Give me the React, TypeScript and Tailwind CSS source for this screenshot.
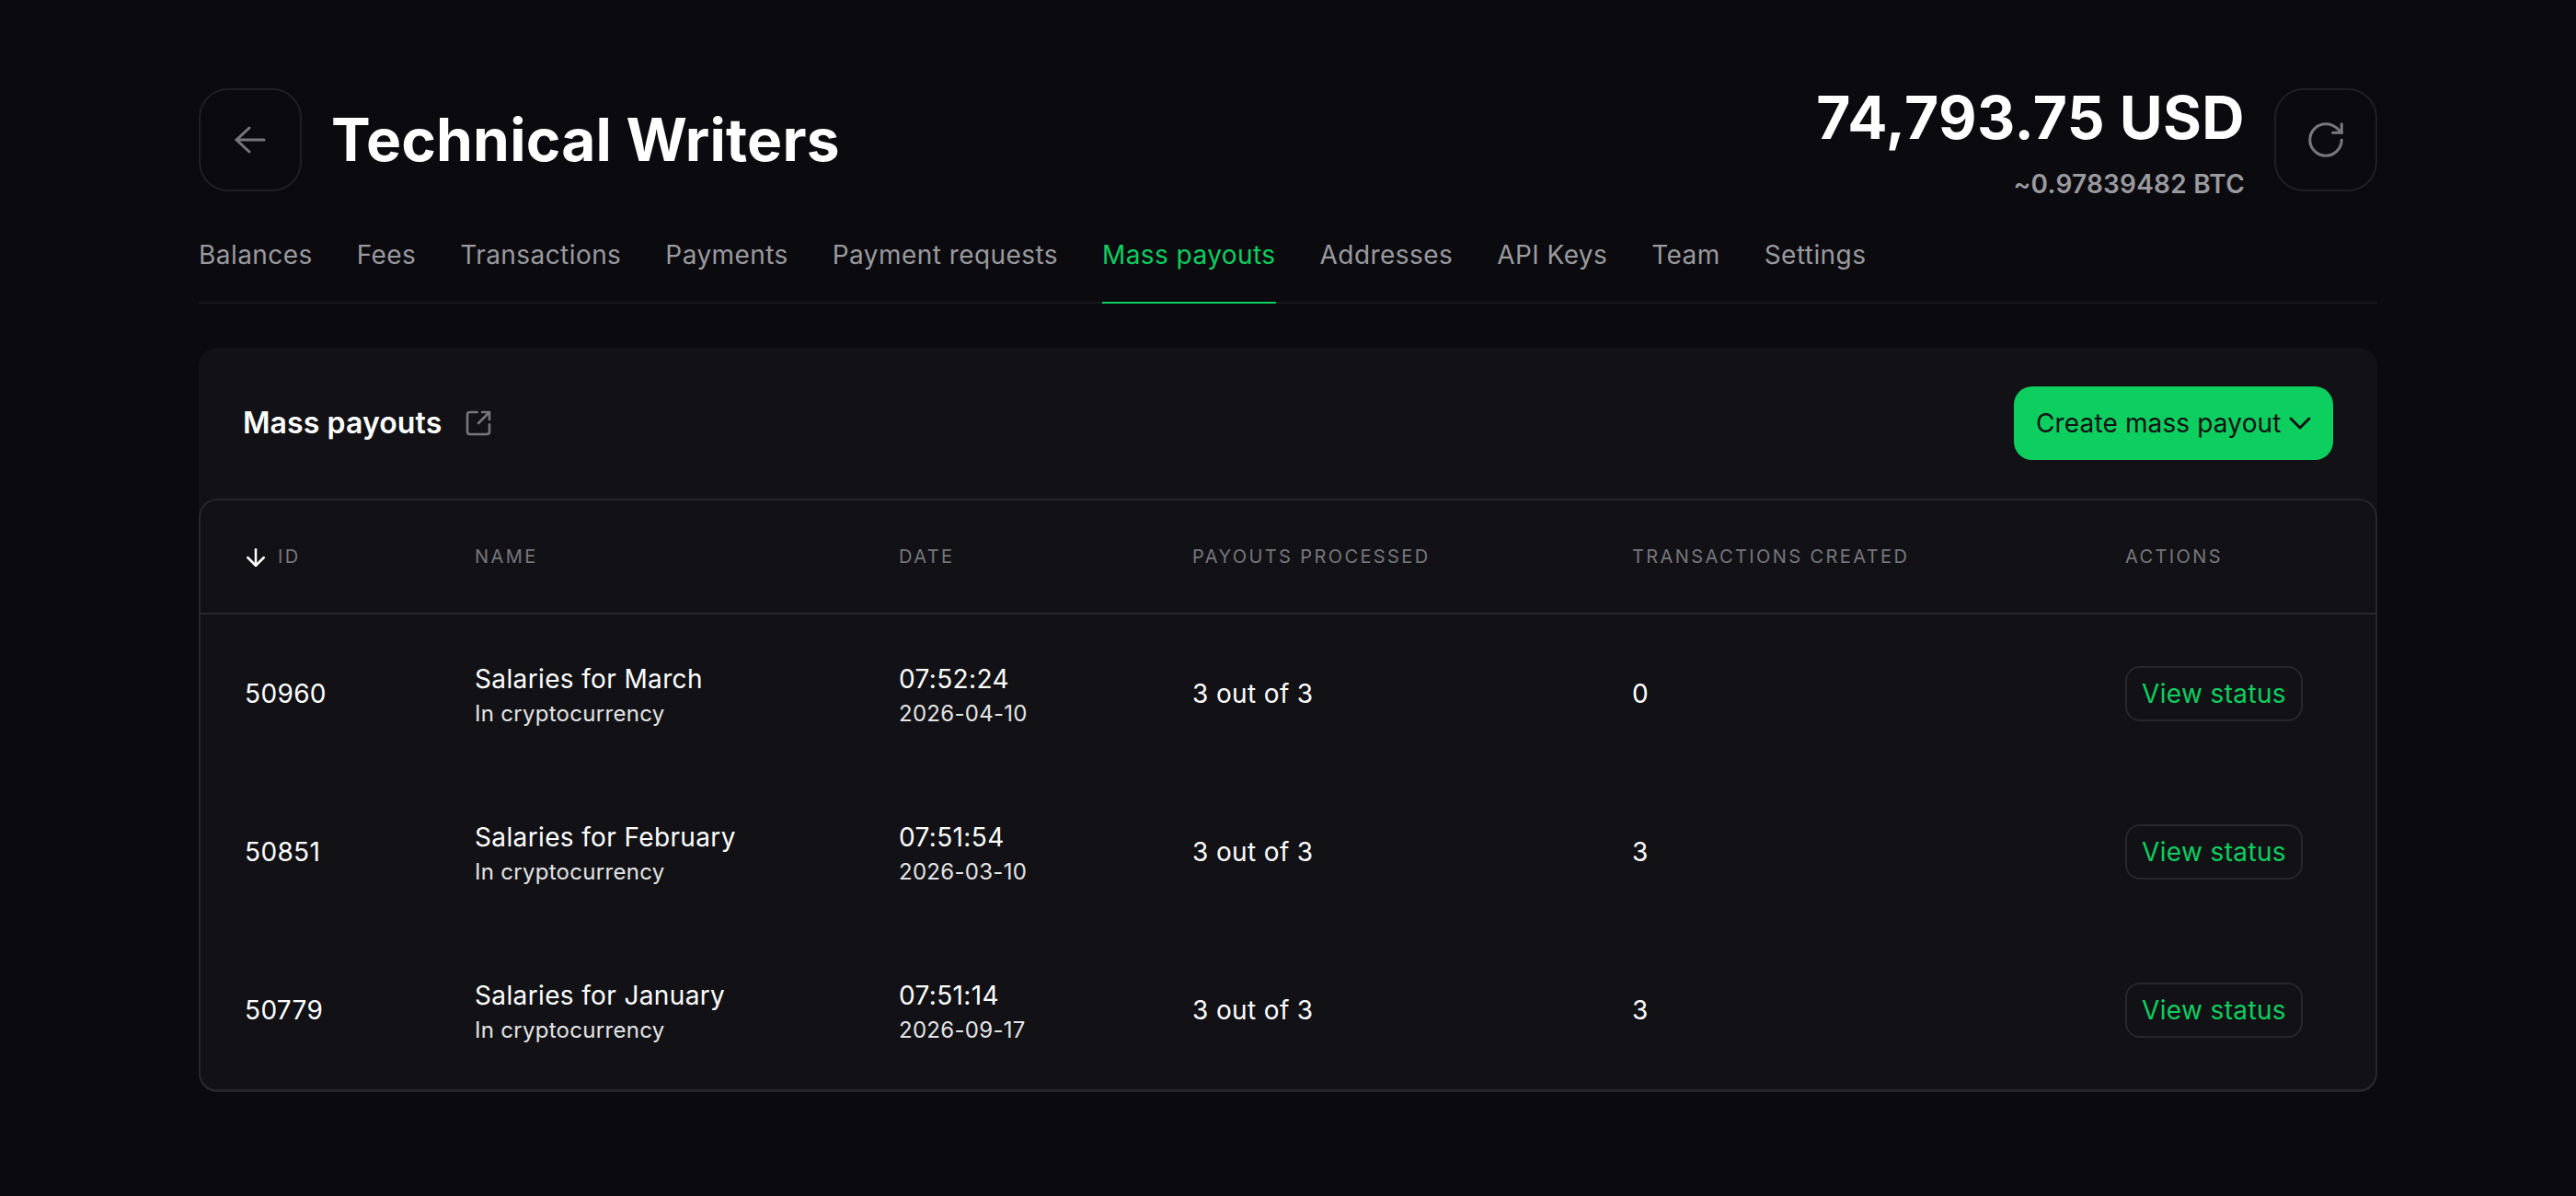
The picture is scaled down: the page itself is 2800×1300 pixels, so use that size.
import { ArrowDown, ChevronDown, RotateCw, SquareArrowOutUpRight } from "lucide-react";

const tabs = [
  "Balances",
  "Fees",
  "Transactions",
  "Payments",
  "Payment requests",
  "Mass payouts",
  "Addresses",
  "API Keys",
  "Team",
  "Settings",
];

const rows = [
  { id: "50960", name: "Salaries for March", time: "07:52:24", date: "2026-04-10", created: "0" },
  { id: "50851", name: "Salaries for February", time: "07:51:54", date: "2026-03-10", created: "3" },
  { id: "50779", name: "Salaries for January", time: "07:51:14", date: "2026-09-17", created: "3" },
];

const gridCols = "grid grid-cols-[250px_461px_319px_478px_536px_1fr] items-center pl-[48px]";
const headCell = "text-[20px] leading-[28px] tracking-[0.12em] text-[#77777c]";
const subText = "text-[24px] leading-[36px] tracking-[0.012em] text-[#e4e4e6]";

export default function App() {
  return (
    <div className="min-h-[1300px] bg-[#0a0a0f] px-[216px] pt-[96px] font-['Inter',sans-serif] text-white">
      <header className="flex h-[112px] items-center justify-between">
        <div className="flex items-center gap-[32px]">
          <button className="flex h-[112px] w-[112px] items-center justify-center rounded-[32px] border-2 border-[#1f1f24] text-[#77777c]">
            <svg width="34" height="30" viewBox="0 0 34 30" fill="none" stroke="currentColor" strokeWidth="3" strokeLinecap="round" strokeLinejoin="round">
              <path d="M32 15H2" />
              <path d="M16 2 2 15l14 13" />
            </svg>
          </button>
          <h1 className="text-[64px] font-bold leading-[72px] tracking-[0.003em]">Technical Writers</h1>
        </div>
        <div className="flex h-[112px] items-start gap-[32px]">
          <div className="text-right">
            <div className="text-[64px] font-bold leading-[64px] tracking-[0.007em]">74,793.75 USD</div>
            <div className="mt-[20px] text-[28px] font-semibold leading-[40px] tracking-[0.008em] text-[#9a9a9e]">~0.97839482 BTC</div>
          </div>
          <button className="flex h-[112px] w-[112px] items-center justify-center rounded-[32px] border-2 border-[#1f1f24] text-[#77777c]">
            <RotateCw size={46} strokeWidth={1.6} />
          </button>
        </div>
      </header>

      <nav className="mt-[49px] flex gap-[48px] border-b-2 border-[#18181c]">
        {tabs.map((tab) => {
          const active = tab === "Mass payouts";
          return (
            <div
              key={tab}
              className={
                active
                  ? "-mb-[2px] border-b-2 border-[#0ccf5f] pb-[31px] text-[28px] leading-[40px] tracking-[0.0155em] text-[#0ccf5f]"
                  : "-mb-[2px] border-b-2 border-transparent pb-[31px] text-[28px] leading-[40px] tracking-[0.0155em] text-[#9a9a9e]"
              }
            >
              {tab}
            </div>
          );
        })}
      </nav>

      <section className="mt-[48px] rounded-[20px] bg-[#121216]">
        <div className="flex h-[164px] items-center justify-between px-[48px]">
          <div className="flex items-center gap-[24px]">
            <h2 className="text-[32px] font-semibold leading-[44px] tracking-[0.003em]">Mass payouts</h2>
            <SquareArrowOutUpRight size={32} strokeWidth={1.9} className="text-[#77777c]" />
          </div>
          <button className="flex h-[80px] w-[347px] items-center whitespace-nowrap rounded-[20px] bg-[#0ccf5f] pl-[24px] pr-[16px] text-[28px] tracking-[0.005em] text-[#101114]">
            Create mass payout
            <ChevronDown size={40} strokeWidth={1.75} className="ml-auto" />
          </button>
        </div>

        <div className="rounded-[20px] border-2 border-b-[3px] border-[#26262b]">
          <div className={`${gridCols} h-[124px] border-b-2 border-[#26262b]`}>
            <div className={`${headCell} flex items-center gap-[9px]`}>
              <ArrowDown size={30} strokeWidth={2} className="-ml-[3px] mt-[2px] text-white" />
              ID
            </div>
            <div className={headCell}>NAME</div>
            <div className={headCell}>DATE</div>
            <div className={headCell}>PAYOUTS PROCESSED</div>
            <div className={headCell}>TRANSACTIONS CREATED</div>
            <div className={headCell}>ACTIONS</div>
          </div>
          {rows.map((row) => (
            <div key={row.id} className={`${gridCols} h-[172px] text-[28px] leading-[40px] tracking-[0.013em]`}>
              <div>{row.id}</div>
              <div className="pt-[3px]">
                <div>{row.name}</div>
                <div className={subText}>In cryptocurrency</div>
              </div>
              <div className="pt-[3px]">
                <div>{row.time}</div>
                <div className={subText}>{row.date}</div>
              </div>
              <div>3 out of 3</div>
              <div>{row.created}</div>
              <div>
                <button className="flex h-[60px] w-[193px] items-center justify-center rounded-[16px] border-2 border-[#26262b] text-[#0ccf5f]">
                  View status
                </button>
              </div>
            </div>
          ))}
        </div>
      </section>
    </div>
  );
}
